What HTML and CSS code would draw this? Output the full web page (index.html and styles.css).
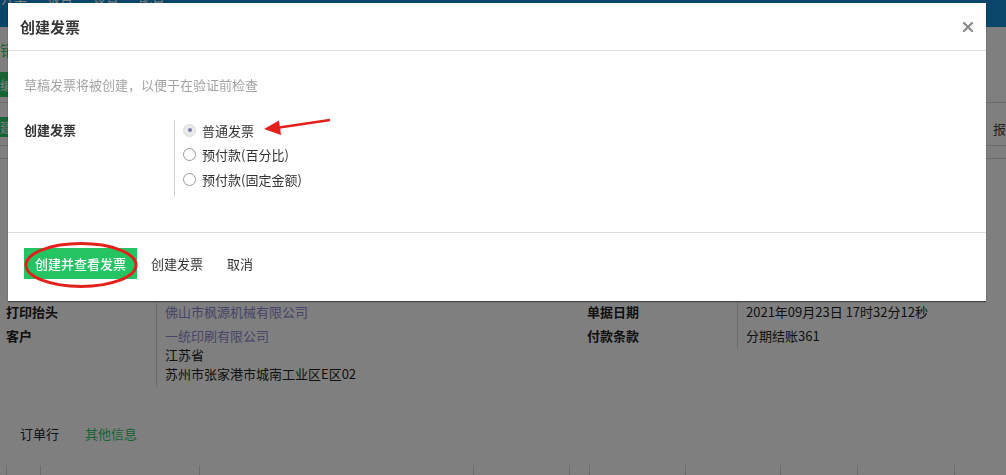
FILE: index.html
```html
<!DOCTYPE html>
<html lang="zh-CN">
<head>
    <meta charset="UTF-8">
    <meta name="viewport" content="width=device-width, initial-scale=1.0">
    <title>创建发票</title>
    <link rel="stylesheet" href="styles.css">
</head>
<body>
    <div class="app">
        <nav class="topbar">
            <span class="menu-item">开单</span>
            <span class="menu-item">报告</span>
            <span class="menu-item">设置</span>
            <span class="menu-item">配置</span>
        </nav>

        <div class="control-panel">
            <div class="breadcrumb">销售订单 / SO0361</div>
            <div class="cp-buttons">
                <button class="btn-green btn-edit">编辑</button>
            </div>
        </div>

        <div class="statusbar">
            <button class="btn-green btn-invoice">创建</button>
            <div class="status-steps">报价单</div>
        </div>

        <div class="sheet">
            <div class="sheet-head"></div>

            <div class="groups">
                <div class="group">
                    <div class="label">打印抬头</div>
                    <div class="value"><span class="link">佛山市枫源机械有限公司</span></div>
                    <div class="label">客户</div>
                    <div class="value">
                        <span class="link">一统印刷有限公司</span><br>
                        江苏省<br>
                        苏州市张家港市城南工业区E区02
                    </div>
                </div>
                <div class="group">
                    <div class="label">单据日期</div>
                    <div class="value">2021年09月23日 17时32分12秒</div>
                    <div class="label">付款条款</div>
                    <div class="value">分期结账361</div>
                </div>
            </div>

            <div class="tabs">
                <span class="tab">订单行</span>
                <span class="tab active">其他信息</span>
            </div>

            <div class="table-head">
                <span style="width: 34px"></span>
                <span style="width: 159px"></span>
                <span style="width: 274px"></span>
                <span style="width: 96px"></span>
                <span style="width: 20px"></span>
                <span style="width: 96px"></span>
                <span style="width: 95px"></span>
                <span style="width: 77px"></span>
                <span style="width: 97px"></span>
                <span style="width: 52px"></span>
            </div>
        </div>
    </div>

    <div class="backdrop"></div>

    <div class="modal">
        <div class="modal-header">
            <h4 class="modal-title">创建发票</h4>
            <button class="close" aria-label="关闭">
                <svg width="10" height="10" viewBox="0 0 10 10">
                    <path d="M1 1 L9 9 M9 1 L1 9" stroke="#8a8a8a" stroke-width="2.2" stroke-linecap="square"/>
                </svg>
            </button>
        </div>

        <div class="modal-body">
            <p class="hint">草稿发票将被创建，以便于在验证前检查</p>
            <div class="field">
                <div class="field-label">创建发票</div>
                <div class="field-value">
                    <label class="radio"><span class="radio-dot checked"></span>普通发票</label>
                    <label class="radio"><span class="radio-dot"></span>预付款(百分比)</label>
                    <label class="radio"><span class="radio-dot"></span>预付款(固定金额)</label>
                </div>
            </div>
        </div>

        <div class="modal-footer">
            <button class="btn-primary">创建并查看发票</button>
            <button class="btn-link">创建发票</button>
            <button class="btn-link">取消</button>
        </div>

        <!-- annotation marks drawn on the screenshot -->
        <svg class="marks" width="978" height="299" viewBox="0 0 978 299">
            <line x1="322" y1="117" x2="268" y2="125" stroke="#e3201b" stroke-width="2.4"/>
            <polygon points="256,126 271,117.5 273,132" fill="#e3201b"/>
            <ellipse cx="73" cy="262" rx="55" ry="21.5" fill="none" stroke="#e3201b" stroke-width="3"/>
        </svg>
    </div>
</body>
</html>
```

FILE: styles.css
```css
body {
    margin: 0;
    font-family: "Noto Sans CJK SC", "Noto Sans", sans-serif;
    font-size: 13px;
    color: #333;
    background-color: #fff;
    height: 475px;
    overflow: hidden;
}

button {
    font-family: inherit;
    font-size: 13px;
    border: none;
    cursor: pointer;
}

/* ---- page behind the dialog ---- */

.topbar {
    height: 27px;
    background-color: #148cd2;
    display: flex;
    align-items: flex-start;
    gap: 20px;
    padding-left: 1px;
    overflow: hidden;
}

.menu-item {
    color: #fff;
    margin-top: -10px;
    line-height: 16px;
}

.control-panel {
    height: 75px;
    border-bottom: 1px solid #d6d6d6;
}

.breadcrumb {
    color: #2fc86a;
    font-size: 15px;
    line-height: 20px;
    padding-top: 13px;
}

.cp-buttons {
    margin-top: 12px;
}

.btn-green {
    background-color: #2fc86a;
    color: #fff;
    line-height: 25px;
    padding: 0 8px;
}

.btn-edit {
    margin-left: -8px;
}

.statusbar {
    height: 42px;
    border-bottom: 1px solid #d6d6d6;
    display: flex;
    justify-content: space-between;
    align-items: center;
}

.btn-invoice {
    margin-left: -21px;
    line-height: 20px;
    margin-top: 6px;
}

.status-steps {
    width: 13px;
    color: #444;
    white-space: nowrap;
    overflow: hidden;
    margin-top: 8px;
}

.sheet {
    margin-top: 12px;
    border-top: 1px solid #d6d6d6;
}

.sheet-head {
    height: 142px;
}

.groups {
    display: grid;
    grid-template-columns: 581px 1fr;
    padding-left: 6px;
}

.group {
    display: grid;
    grid-template-columns: 150px 1fr;
    align-content: start;
}

.label {
    font-weight: bold;
    color: #222;
    line-height: 19px;
    padding-top: 1px;
}

.value {
    border-left: 1px solid #d6d6d6;
    padding: 1px 0 4px 8px;
    line-height: 19px;
    color: #222;
}

.link {
    color: #8e8bcf;
}

.tabs {
    display: flex;
    padding: 37px 0 0 7px;
}

.tab {
    padding: 0 13px;
    line-height: 19px;
    color: #222;
}

.tab.active {
    color: #2fc86a;
}

.table-head {
    display: flex;
    margin: 22px 0 0 6px;
    height: 20px;
}

.table-head span {
    border-left: 1px solid #d6d6d6;
    box-sizing: border-box;
}

.backdrop {
    position: fixed;
    inset: 0;
    background-color: rgba(0, 0, 0, 0.5);
}

/* ---- dialog ---- */

.modal {
    position: absolute;
    top: 3px;
    left: 8px;
    width: 978px;
    background-color: #fff;
    box-shadow: 0 1px 1px rgba(0, 0, 0, 0.45);
}

.modal-header {
    height: 47px;
    display: flex;
    align-items: center;
    justify-content: space-between;
    padding: 0 12px;
    border-bottom: 1px solid #d8dee4;
}

.modal-title {
    margin: 0;
    font-size: 15px;
    font-weight: bold;
    color: #383838;
}

.close {
    background: none;
    padding: 0;
    width: 10px;
    height: 10px;
    margin-right: 1px;
    display: flex;
}

.modal-body {
    padding: 24px 16px 35px;
}

.hint {
    margin: 0 0 26px;
    line-height: 19px;
    color: #a3a3a3;
}

.field {
    display: grid;
    grid-template-columns: 150px 1fr;
}

.field-label {
    font-weight: bold;
    color: #333;
    line-height: 19px;
}

.field-value {
    border-left: 1px solid #d4d4d4;
    padding: 0 0 8px 8px;
    display: flex;
    flex-direction: column;
    gap: 4.5px;
}

.radio {
    display: flex;
    align-items: center;
    gap: 6px;
    height: 20px;
    color: #333;
}

.radio-dot {
    width: 11px;
    height: 11px;
    border: 1px solid #9a9a9a;
    border-radius: 50%;
    background-color: #fff;
    display: flex;
    align-items: center;
    justify-content: center;
}

.radio-dot.checked {
    border-color: #dadada;
    background-color: #e9e9ee;
}

.radio-dot.checked::after {
    content: "";
    width: 4px;
    height: 4px;
    border-radius: 50%;
    background-color: #7c7bad;
}

.modal-footer {
    border-top: 1px solid #dedede;
    padding: 15px 16px 22px;
    display: flex;
    align-items: center;
}

.btn-primary {
    background-color: #25c462;
    color: #fff;
    height: 31px;
    padding: 0 11px;
    font-weight: 500;
}

.btn-link {
    background: none;
    color: #333;
    padding: 0 12px;
    line-height: 31px;
}

.btn-primary + .btn-link {
    margin-left: 2px;
}

.marks {
    position: absolute;
    top: 0;
    left: 0;
    pointer-events: none;
}
```
